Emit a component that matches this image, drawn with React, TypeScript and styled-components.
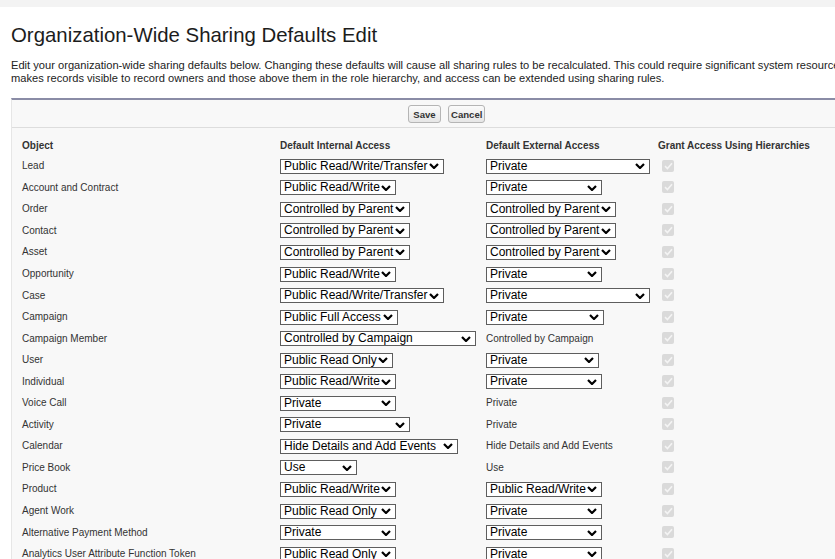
import React from "react";
import styled, { createGlobalStyle } from "styled-components";

const GlobalStyle = createGlobalStyle`
  html, body {
    margin: 0;
    padding: 0;
    background: #ffffff;
    overflow: hidden;
    font-family: "Liberation Sans", Arial, sans-serif;
    color: #222;
  }
`;

const TopBand = styled.div`
  height: 7px;
  background: #f3f3f3;
`;

const Page = styled.div`
  width: 1700px;
  padding-left: 11px;
`;

const Title = styled.h1`
  margin: 17px 0 0 0;
  font-size: 20.4px;
  font-weight: normal;
  line-height: 23px;
  color: #1c1c1c;
`;

const Description = styled.p`
  margin: 12px 0 0 0;
  font-size: 11.13px;
  line-height: 13px;
  color: #222;
  white-space: nowrap;
`;

const Panel = styled.div`
  margin-top: 13px;
  border-top: 2px solid #8a8ca6;
  border-left: 1px solid #e6e6e6;
  background: #f8f8f8;
  min-height: 600px;
`;

const ButtonBar = styled.div`
  display: flex;
  gap: 7px;
  padding: 5px 0 4px 396px;
  border-bottom: 1px solid #dddddd;
`;

const Button = styled.button`
  min-width: 33px;
  height: 18px;
  padding: 0 2px;
  font-family: "Liberation Sans", Arial, sans-serif;
  font-size: 9.6px;
  font-weight: bold;
  color: #333;
  background: linear-gradient(#fbfbfb, #e6e6e6);
  border: 1px solid #b5b5b5;
  border-radius: 3px;
`;

const Table = styled.div`
  padding: 7px 0 0 10px;
`;

const Row = styled.div<{ $header?: boolean }>`
  display: grid;
  grid-template-columns: 258px 206px 172px auto;
  align-items: center;
  height: ${(p) => (p.$header ? "20px" : "21.56px")};
`;

const HeadCell = styled.div`
  font-size: 10px;
  font-weight: bold;
  color: #333;
`;

const Label = styled.div`
  font-size: 10px;
  color: #333;
  white-space: nowrap;
`;

const SelectBox = styled.div`
  box-sizing: border-box;
  display: flex;
  align-items: center;
  height: 15px;
  margin-top: 1px;
  padding: 0 4px 0 3px;
  background: #fff;
  border: 1px solid #5e5e5e;
  font-size: 12px;
  line-height: 13px;
  color: #000;
`;

const SelectText = styled.span`
  flex: 1;
  white-space: nowrap;
  overflow: hidden;
`;

const Chevron = styled.svg`
  flex: none;
  width: 10px;
  height: 6px;
`;

const CheckBox = styled.span`
  display: flex;
  align-items: center;
  justify-content: center;
  width: 12px;
  height: 12px;
  margin-left: 4px;
  border-radius: 2px;
  background: #dadada;
`;

type Cell = { v: string; w?: number };

const rows: { name: string; i: Cell; e: Cell }[] = [
  { name: "Lead", i: { v: "Public Read/Write/Transfer", w: 164 }, e: { v: "Private", w: 164 } },
  { name: "Account and Contract", i: { v: "Public Read/Write", w: 116 }, e: { v: "Private", w: 116 } },
  { name: "Order", i: { v: "Controlled by Parent", w: 130 }, e: { v: "Controlled by Parent", w: 130 } },
  { name: "Contact", i: { v: "Controlled by Parent", w: 130 }, e: { v: "Controlled by Parent", w: 130 } },
  { name: "Asset", i: { v: "Controlled by Parent", w: 130 }, e: { v: "Controlled by Parent", w: 130 } },
  { name: "Opportunity", i: { v: "Public Read/Write", w: 116 }, e: { v: "Private", w: 116 } },
  { name: "Case", i: { v: "Public Read/Write/Transfer", w: 164 }, e: { v: "Private", w: 164 } },
  { name: "Campaign", i: { v: "Public Full Access", w: 118 }, e: { v: "Private", w: 118 } },
  { name: "Campaign Member", i: { v: "Controlled by Campaign", w: 196 }, e: { v: "Controlled by Campaign" } },
  { name: "User", i: { v: "Public Read Only", w: 113 }, e: { v: "Private", w: 113 } },
  { name: "Individual", i: { v: "Public Read/Write", w: 116 }, e: { v: "Private", w: 116 } },
  { name: "Voice Call", i: { v: "Private", w: 116 }, e: { v: "Private" } },
  { name: "Activity", i: { v: "Private", w: 130 }, e: { v: "Private" } },
  { name: "Calendar", i: { v: "Hide Details and Add Events", w: 178 }, e: { v: "Hide Details and Add Events" } },
  { name: "Price Book", i: { v: "Use", w: 77 }, e: { v: "Use" } },
  { name: "Product", i: { v: "Public Read/Write", w: 116 }, e: { v: "Public Read/Write", w: 116 } },
  { name: "Agent Work", i: { v: "Public Read Only", w: 116 }, e: { v: "Private", w: 116 } },
  { name: "Alternative Payment Method", i: { v: "Private", w: 116 }, e: { v: "Private", w: 116 } },
  { name: "Analytics User Attribute Function Token", i: { v: "Public Read Only", w: 116 }, e: { v: "Private", w: 116 } },
];

const FakeSelect = ({ cell }: { cell: Cell }) =>
  cell.w ? (
    <div>
      <SelectBox style={{ width: cell.w }}>
        <SelectText>{cell.v}</SelectText>
        <Chevron viewBox="0 0 10 6">
          <path d="M1 1 L5 5 L9 1" fill="none" stroke="#000" strokeWidth="2.2" />
        </Chevron>
      </SelectBox>
    </div>
  ) : (
    <Label>{cell.v}</Label>
  );

const DisabledCheck = () => (
  <CheckBox>
    <svg width="9" height="8" viewBox="0 0 9 8">
      <path d="M1 4.2 L3.4 6.5 L8 1.2" fill="none" stroke="#f4f4f4" strokeWidth="1.6" />
    </svg>
  </CheckBox>
);

export default function App() {
  return (
    <>
      <GlobalStyle />
      <TopBand />
      <Page>
        <Title>Organization-Wide Sharing Defaults Edit</Title>
        <Description>
          Edit your organization-wide sharing defaults below. Changing these defaults will cause all sharing rules to be
          recalculated. This could require significant system resources and time depending on the amount of data in your
          organization. Setting an object to Private
          <br />
          makes records visible to record owners and those above them in the role hierarchy, and access can be extended
          using sharing rules.
        </Description>
        <Panel>
          <ButtonBar>
            <Button>Save</Button>
            <Button>Cancel</Button>
          </ButtonBar>
          <Table>
            <Row $header>
              <HeadCell>Object</HeadCell>
              <HeadCell>Default Internal Access</HeadCell>
              <HeadCell>Default External Access</HeadCell>
              <HeadCell>Grant Access Using Hierarchies</HeadCell>
            </Row>
            {rows.map((r) => (
              <Row key={r.name}>
                <Label>{r.name}</Label>
                <FakeSelect cell={r.i} />
                <FakeSelect cell={r.e} />
                <DisabledCheck />
              </Row>
            ))}
          </Table>
        </Panel>
      </Page>
    </>
  );
}
